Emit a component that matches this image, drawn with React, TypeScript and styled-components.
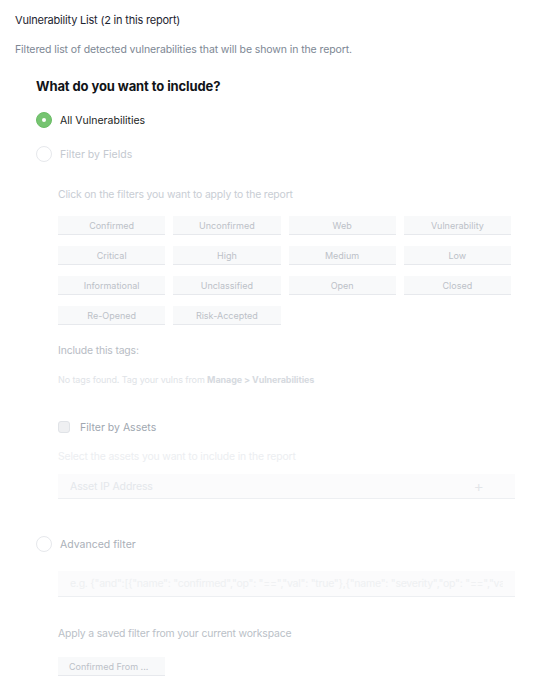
import React from "react";
import styled, { createGlobalStyle } from "styled-components";

const GlobalStyle = createGlobalStyle`
  body {
    margin: 0;
    background: #ffffff;
    font-family: Inter, "Liberation Sans", Arial, sans-serif;
  }
`;

const Page = styled.div`
  padding: 12px 15px 0 15px;
  width: 543px;
  box-sizing: border-box;
`;

const Title = styled.div`
  font-size: 11px;
  line-height: 16px;
  letter-spacing: -0.2px;
  color: #1d2430;
`;

const Description = styled.div`
  margin-top: 15px;
  font-size: 10.5px;
  line-height: 14px;
  letter-spacing: -0.1px;
  color: #7d8794;
`;

// bloque de opciones (x=36)
const Section = styled.div`
  margin-left: 21px;
`;

const Heading = styled.div`
  margin-top: 20px;
  font-size: 13px;
  line-height: 18px;
  font-weight: 700;
  letter-spacing: -0.1px;
  color: #111418;
`;

const RadioRow = styled.label<{ $top: number }>`
  display: flex;
  align-items: center;
  gap: 8px;
  height: 18px;
  margin-top: ${(p) => p.$top}px;
`;

const RadioCircle = styled.span<{ $checked?: boolean }>`
  width: 16px;
  height: 16px;
  border-radius: 50%;
  box-sizing: border-box;
  display: flex;
  align-items: center;
  justify-content: center;
  background: ${(p) => (p.$checked ? "#76c471" : "#ffffff")};
  border: 1px solid ${(p) => (p.$checked ? "#6bbd66" : "#e6e8ec")};

  &::after {
    content: "";
    display: ${(p) => (p.$checked ? "block" : "none")};
    width: 4px;
    height: 4px;
    border-radius: 50%;
    background: #ffffff;
  }
`;

const RadioLabel = styled.span<{ $color: string }>`
  font-size: 10.5px;
  color: ${(p) => p.$color};
`;

// bloque anidado (x=58)
const Nested = styled.div`
  margin-left: 22px;
  width: 457px;
`;

const Hint = styled.div<{ $top: number; $color: string }>`
  margin-top: ${(p) => p.$top}px;
  font-size: 10.4px;
  line-height: 14px;
  letter-spacing: -0.15px;
  color: ${(p) => p.$color};
`;

const ChipGrid = styled.div`
  margin-top: 14px;
  width: 453px;
  display: grid;
  grid-template-columns: repeat(4, 1fr);
  column-gap: 8px;
  row-gap: 11px;
`;

const Chip = styled.div<{ $left?: boolean }>`
  height: 19px;
  box-sizing: border-box;
  background: #f8f9fa;
  border-bottom: 1px solid #e7e9ed;
  font-size: 9px;
  color: #bcc1c8;
  display: flex;
  align-items: center;
  justify-content: ${(p) => (p.$left ? "flex-start" : "center")};
  padding-left: ${(p) => (p.$left ? "11px" : "0")};
`;

const SavedChip = styled(Chip)`
  margin-top: 16px;
  width: 107px;
`;

const Small = styled.div`
  margin-top: 16px;
  font-size: 9px;
  line-height: 12px;
  letter-spacing: -0.1px;
  color: #e0e3e7;

  b {
    color: #d6dae0;
  }
`;

const CheckRow = styled.label`
  display: flex;
  align-items: center;
  gap: 10px;
  height: 14px;
  margin-top: 34px;
`;

const CheckBox = styled.span`
  width: 12px;
  height: 12px;
  box-sizing: border-box;
  border-radius: 3px;
  background: #eff0f2;
  border: 1px solid #e0e3e7;
`;

const Input = styled.div<{ $top: number; $height: number }>`
  margin-top: ${(p) => p.$top}px;
  height: ${(p) => p.$height}px;
  box-sizing: border-box;
  background: #fbfbfc;
  border-bottom: 1px solid #edeff2;
  display: flex;
  align-items: center;
  padding: 0 12px 0 12px;
  overflow: hidden;
  white-space: nowrap;
  font-size: 10.5px;
`;

const Placeholder = styled.span<{ $color: string; $tight?: boolean }>`
  flex: 1;
  overflow: hidden;
  letter-spacing: ${(p) => (p.$tight ? "-0.25px" : "-0.1px")};
  color: ${(p) => p.$color};
`;

const Plus = styled.span`
  font-size: 16px;
  font-weight: 300;
  color: #e2e5e9;
  margin-right: 19px;
`;

const filters = [
  "Confirmed",
  "Unconfirmed",
  "Web",
  "Vulnerability",
  "Critical",
  "High",
  "Medium",
  "Low",
  "Informational",
  "Unclassified",
  "Open",
  "Closed",
  "Re-Opened",
  "Risk-Accepted",
];

export default function App() {
  return (
    <Page>
      <GlobalStyle />
      <Title>Vulnerability List (2 in this report)</Title>
      <Description>
        Filtered list of detected vulnerabilities that will be shown in the report.
      </Description>
      <Section>
        <Heading>What do you want to include?</Heading>
        <RadioRow $top={16}>
          <RadioCircle $checked />
          <RadioLabel $color="#1b1e23">All Vulnerabilities</RadioLabel>
        </RadioRow>
        <RadioRow $top={16}>
          <RadioCircle />
          <RadioLabel $color="#c4c9d0">Filter by Fields</RadioLabel>
        </RadioRow>
        <Nested>
          <Hint $top={25} $color="#c8cdd4">
            Click on the filters you want to apply to the report
          </Hint>
          <ChipGrid>
            {filters.map((f) => (
              <Chip key={f}>{f}</Chip>
            ))}
          </ChipGrid>
          <Hint $top={19} $color="#b7bcc4">
            Include this tags:
          </Hint>
          <Small>
            No tags found. Tag your vulns from <b>Manage &gt; Vulnerabilities</b>
          </Small>
          <CheckRow>
            <CheckBox />
            <RadioLabel $color="#a0a7b0">Filter by Assets</RadioLabel>
          </CheckRow>
          <Hint $top={16} $color="#eceef1">
            Select the assets you want to include in the report
          </Hint>
          <Input $top={10} $height={25}>
            <Placeholder $color="#e4e7eb">Asset IP Address</Placeholder>
            <Plus>+</Plus>
          </Input>
        </Nested>
        <RadioRow $top={36}>
          <RadioCircle />
          <RadioLabel $color="#aab0b8">Advanced filter</RadioLabel>
        </RadioRow>
        <Nested>
          <Input $top={18} $height={26}>
            <Placeholder $color="#eef0f2" $tight>
              e.g. {'{"and":[{"name": "confirmed","op": "==","val": "true"},{"name": "severity","op": "==","val'}
            </Placeholder>
          </Input>
          <Hint $top={30} $color="#babfc7">
            Apply a saved filter from your current workspace
          </Hint>
          <SavedChip $left>Confirmed From ...</SavedChip>
        </Nested>
      </Section>
    </Page>
  );
}
